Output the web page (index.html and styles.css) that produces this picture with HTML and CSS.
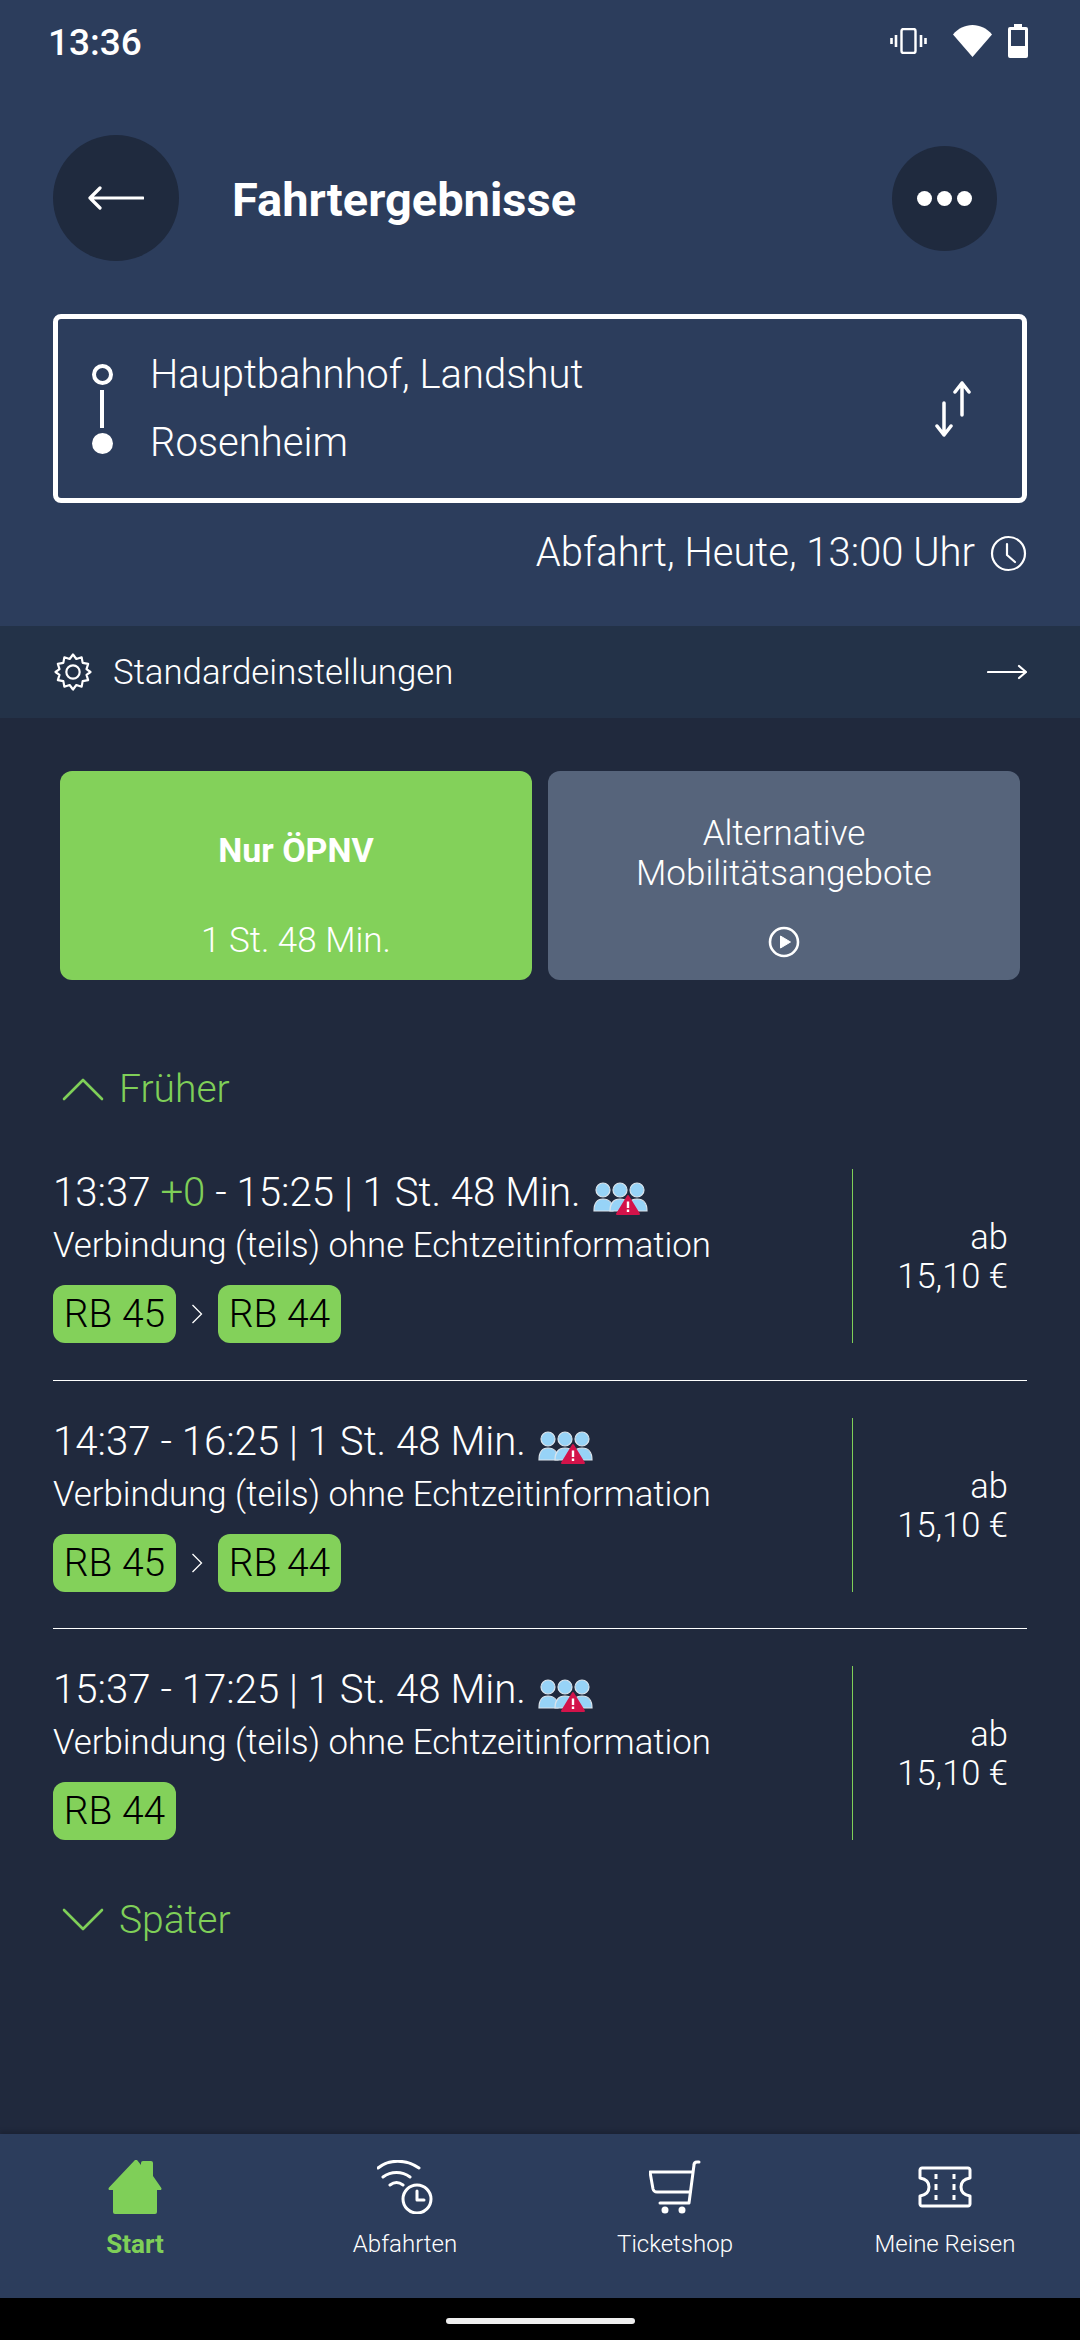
FILE: index.html
```html
<!DOCTYPE html>
<html>
<head>
<meta charset="utf-8"/>
<title>Fahrtergebnisse</title>
<link rel="stylesheet" href="styles.css">
</head>
<body>
<div class="page">

<header class="head">
  <div class="status">
    <span class="clock">13:36</span>
    <div class="status-icons">
      <svg class="ic-vib" width="37" height="26" viewBox="0 0 37 26" fill="none" stroke="#fff"><rect x="11.5" y="1" width="14" height="24" rx="2" stroke-width="2.4"/><path d="M6 7v12M1.5 10v6M31 7v12M35.500 10v6" stroke-width="2.6"/></svg>
      <svg class="ic-wifi" width="39" height="32" viewBox="0 0 39 32"><path d="M0 9.500C5 3.500 12 0 19.500 0S34 3.500 39 9.500L19.500 32z" fill="#fff"/></svg>
      <svg class="ic-batt" width="20" height="34" viewBox="0 0 20 34"><path d="M6 0h8v3h4a2 2 0 0 1 2 2v27a2 2 0 0 1-2 2H2a2 2 0 0 1-2-2V5a2 2 0 0 1 2-2h4z" fill="#fff"/><rect x="3" y="6" width="14" height="16" fill="#2c3d5c"/></svg>
    </div>
  </div>

  <div class="topbar">
    <button class="round round-back">
      <svg width="56" height="24" viewBox="0 0 56 24" fill="none" stroke="#fff" stroke-width="3.200" stroke-linecap="round" stroke-linejoin="round"><path d="M2 12h53M12 2 2 12l10 10"/></svg>
    </button>
    <h1 class="title">Fahrtergebnisse</h1>
    <button class="round round-more">
      <span class="dot"></span><span class="dot"></span><span class="dot"></span>
    </button>
  </div>

  <div class="route">
    <div class="route-marks">
      <span class="mark-open"></span>
      <span class="mark-line"></span>
      <span class="mark-full"></span>
    </div>
    <div class="route-names">
      <div>Hauptbahnhof, Landshut</div>
      <div>Rosenheim</div>
    </div>
    <svg class="swap" width="37" height="56" viewBox="0 0 37 56" fill="none" stroke="#fff" stroke-width="3.500" stroke-linecap="round" stroke-linejoin="round"><path d="M27 34V2M20 11l7-9 7 9M9 22v32M2 45l7 9 7-9"/></svg>
  </div>

  <div class="when">
    <span>Abfahrt, Heute, 13:00 Uhr</span>
    <svg width="37" height="37" viewBox="0 0 37 37" fill="none" stroke="#fff" stroke-width="2.200" stroke-linecap="round" stroke-linejoin="round"><circle cx="18.500" cy="18.500" r="16.500"/><path d="M17 9v11l8 7"/></svg>
  </div>
</header>

<div class="settings">
  <svg width="40" height="40" viewBox="0 0 24 24" fill="none" stroke="#fff" stroke-width="1.300" stroke-linejoin="round"><path d="M12 1.500l2 2.700 3.200-1 .6 3.300 3.300.6-1 3.200 2.400 1.700-2.400 1.700 1 3.200-3.300.6-.6 3.300-3.200-1-2 2.700-2-2.700-3.200 1-.6-3.300-3.300-.6 1-3.200L1.500 12l2.400-1.700-1-3.200 3.300-.6.6-3.300 3.200 1z"/><circle cx="12" cy="12" r="4"/></svg>
  <span class="settings-label">Standardeinstellungen</span>
  <svg width="40" height="18" viewBox="0 0 40 18" fill="none" stroke="#fff" stroke-width="2.200" stroke-linecap="round" stroke-linejoin="round"><path d="M1 9h38M32 3l7 6-7 6"/></svg>
</div>

<main class="main">
  <div class="modes">
    <div class="mode mode-green">
      <b class="mode-name">Nur ÖPNV</b>
      <span class="mode-time">1 St. 48 Min.</span>
    </div>
    <div class="mode mode-grey">
      <span class="mode-alt">Alternative<br>Mobilitätsangebote</span>
      <svg width="32" height="32" viewBox="0 0 32 32" fill="none" stroke="#fff" stroke-width="2.600"><circle cx="16" cy="16" r="14"/><path d="M12.500 10l10 6-10 6z" fill="#fff" stroke-width="1" stroke-linejoin="round"/></svg>
    </div>
  </div>

  <div class="pager pager-up">
    <svg width="42" height="24" viewBox="0 0 42 24" fill="none" stroke="#7fcf58" stroke-width="2.600" stroke-linecap="round" stroke-linejoin="round"><path d="M2 22 21 3l19 19"/></svg>
    <span>Früher</span>
  </div>

  <div class="trip">
    <div class="trip-info">
      <div class="trip-time">13:37 <span class="ontime">+0</span> - 15:25 | 1 St. 48 Min.
        <svg class="crowd" width="55" height="34" viewBox="0 0 55 34"><use href="#crowd"/></svg>
      </div>
      <div class="trip-note">Verbindung (teils) ohne Echtzeitinformation</div>
      <div class="lines">
        <span class="line">RB 45</span>
        <svg class="sep" width="12" height="20" viewBox="0 0 12 20" fill="none" stroke="#fff" stroke-width="1.300"><path d="M1.500 1l9 9-9 9"/></svg>
        <span class="line">RB 44</span>
      </div>
    </div>
    <div class="trip-price">ab<br>15,10 €</div>
  </div>

  <div class="trip">
    <div class="trip-info">
      <div class="trip-time">14:37 - 16:25 | 1 St. 48 Min.
        <svg class="crowd" width="55" height="34" viewBox="0 0 55 34"><use href="#crowd"/></svg>
      </div>
      <div class="trip-note">Verbindung (teils) ohne Echtzeitinformation</div>
      <div class="lines">
        <span class="line">RB 45</span>
        <svg class="sep" width="12" height="20" viewBox="0 0 12 20" fill="none" stroke="#fff" stroke-width="1.300"><path d="M1.500 1l9 9-9 9"/></svg>
        <span class="line">RB 44</span>
      </div>
    </div>
    <div class="trip-price">ab<br>15,10 €</div>
  </div>

  <div class="trip trip-last">
    <div class="trip-info">
      <div class="trip-time">15:37 - 17:25 | 1 St. 48 Min.
        <svg class="crowd" width="55" height="34" viewBox="0 0 55 34"><use href="#crowd"/></svg>
      </div>
      <div class="trip-note">Verbindung (teils) ohne Echtzeitinformation</div>
      <div class="lines">
        <span class="line">RB 44</span>
      </div>
    </div>
    <div class="trip-price">ab<br>15,10 €</div>
  </div>

  <div class="pager pager-down">
    <svg width="42" height="24" viewBox="0 0 42 24" fill="none" stroke="#7fcf58" stroke-width="2.600" stroke-linecap="round" stroke-linejoin="round"><path d="M2 2l19 19L40 2"/></svg>
    <span>Später</span>
  </div>
</main>

<nav class="nav">
  <div class="nav-item nav-active">
    <svg width="54" height="54" viewBox="0 0 54 54"><path d="M27 0 1 27.500c-1 1.200-.5 2.500 1 2.500h3v22a2 2 0 0 0 2 2h40a2 2 0 0 0 2-2V30h3c1.500 0 2-1.300 1-2.500L45 16V3a2 2 0 0 0-2-2h-8a2 2 0 0 0-2 2v2l-4-5a1.400 1.400 0 0 0-2 0z" fill="#7fcf58"/></svg>
    <span>Start</span>
  </div>
  <div class="nav-item">
    <svg width="56" height="54" viewBox="0 0 56 54" fill="none" stroke="#fff" stroke-width="3" stroke-linecap="round"><path d="M1 8C12-1 29-1 42 8M6 17c8-6 19-6 27 0M13 25c4-3 9-3 13 0"/><circle cx="40" cy="39" r="14"/><path d="M40 31v9h7" stroke-linejoin="round"/></svg>
    <span>Abfahrten</span>
  </div>
  <div class="nav-item">
    <svg width="52" height="54" viewBox="0 0 52 54" fill="none" stroke="#fff" stroke-width="3" stroke-linecap="round" stroke-linejoin="round"><path d="M50 2h-2c-2 0-3 1-3 3l-5 38H11"/><path d="M43 12H1l3 17c.5 2 2 3 4 3h33"/><circle cx="16" cy="50" r="2" fill="#fff"/><circle cx="33" cy="50" r="2" fill="#fff"/></svg>
    <span>Ticketshop</span>
  </div>
  <div class="nav-item">
    <svg width="54" height="54" viewBox="0 0 54 54" fill="none" stroke="#fff" stroke-width="3" stroke-linejoin="round"><path d="M4 8h46c1 0 2 1 2 2v8c-6 1-9 4-9 9s3 8 9 9v8c0 1-1 2-2 2H4c-1 0-2-1-2-2v-8c6-1 9-4 9-9s-3-8-9-9v-8c0-1 1-2 2-2z"/><path d="M18 14v5M18 24v6M18 35v5M36 14v5M36 24v6M36 35v5"/></svg>
    <span>Meine Reisen</span>
  </div>
</nav>

<div class="gesture"><span class="handle"></span></div>

</div>

<svg class="defs" width="0" height="0">
  <defs>
    <g id="crowd">
      <g fill="#97d3f7" stroke="#dbe4ec" stroke-width="1.200">
        <circle cx="10" cy="8" r="7"/><path d="M1 29c0-8 3-12 9-12s10 4 10 12z"/>
        <circle cx="44" cy="8" r="7"/><path d="M34 29c0-8 4-12 10-12s10 4 10 12z"/>
        <circle cx="27" cy="8" r="7"/><path d="M17 29c0-8 4-12 10-12s10 4 10 12z"/>
      </g>
      <path d="M35 14 46 32H24z" fill="#d3134a" stroke="#d3134a" stroke-width="2" stroke-linejoin="round"/>
      <path d="M35 19.500v6.500M35 27.500v2.500" stroke="#fff" stroke-width="2.400"/>
    </g>
  </defs>
</svg>

</body>
</html>
```

FILE: styles.css
```css
body {
  margin: 0;
  background-color: #20293d;
  font-family: Roboto, sans-serif;
  color: #fff;
}

button {
  border: none;
  padding: 0;
  font: inherit;
  color: inherit;
}

.page {
  width: 1080px;
  height: 2340px;
  display: flex;
  flex-direction: column;
  overflow: hidden;
}

.defs {
  position: absolute;
}

/* top part */
.head {
  height: 626px;
  box-sizing: border-box;
  background-color: #2c3d5c;
  padding: 0 53px;
}

.status {
  height: 84px;
  display: flex;
  align-items: center;
  justify-content: space-between;
  margin-right: -1px;
  margin-left: -5px;
}

.clock {
  font-size: 37px;
  font-weight: 500;
}

.status-icons {
  display: flex;
  align-items: center;
  margin-top: -3px;
}

.ic-wifi {
  margin-left: 26px;
}

.ic-batt {
  margin-left: 16px;
}

.topbar {
  height: 126px;
  margin-top: 51px;
  display: flex;
  align-items: center;
}

.round {
  display: flex;
  align-items: center;
  justify-content: center;
  border-radius: 50%;
  background-color: #1f2a3e;
  flex: none;
}

.round-back {
  width: 126px;
  height: 126px;
}

.round-more {
  width: 105px;
  height: 105px;
  gap: 5px;
  margin-right: 30px;
}

.dot {
  width: 15px;
  height: 15px;
  border-radius: 50%;
  background-color: #fff;
}

.title {
  flex: 1;
  margin: 2px 0 0 53px;
  font-size: 47px;
  font-weight: 700;
}

.route {
  height: 189px;
  box-sizing: border-box;
  margin-top: 53px;
  border: 5px solid #fff;
  border-radius: 8px;
  display: flex;
  align-items: center;
  padding: 0 0 0 33px;
}

.route-marks {
  width: 22px;
  height: 90px;
  display: flex;
  flex-direction: column;
  align-items: center;
  justify-content: space-between;
}

.mark-open {
  width: 21px;
  height: 21px;
  box-sizing: border-box;
  border: 4px solid #fff;
  border-radius: 50%;
}

.mark-line {
  width: 4px;
  flex: 1;
  margin: 5px 0;
  background-color: #fff;
}

.mark-full {
  width: 21px;
  height: 21px;
  border-radius: 50%;
  background-color: #fff;
}

.route-names {
  flex: 1;
  margin-left: 37px;
  font-size: 40px;
  font-weight: 300;
  line-height: 68px;
}

.swap {
  margin-right: 50px;
}

.when {
  display: flex;
  align-items: center;
  justify-content: flex-end;
  gap: 15px;
  margin-top: 28px;
  font-size: 40px;
  font-weight: 300;
  line-height: 44px;
}

.settings {
  height: 92px;
  flex: none;
  box-sizing: border-box;
  padding: 0 53px;
  background-color: #233248;
  display: flex;
  align-items: center;
}

.settings-label {
  flex: 1;
  margin-left: 20px;
  font-size: 34.800px;
  font-weight: 300;
}

/* results */
.main {
  flex: 1;
  padding: 53px 53px 0;
}

.modes {
  display: flex;
  gap: 16px;
  margin: 0 7px;
}

.mode {
  flex: 1;
  height: 209px;
  box-sizing: border-box;
  border-radius: 12px;
  display: flex;
  flex-direction: column;
  align-items: center;
  text-align: center;
}

.mode-green {
  background-color: #83d15a;
}

.mode-grey {
  background-color: #56647b;
  font-size: 35px;
  font-weight: 300;
  padding-top: 43px;
}

.mode-name {
  margin-top: 61px;
  font-size: 34px;
  line-height: 36px;
}

.mode-time {
  margin-top: 53px;
  font-size: 35px;
  font-weight: 300;
  line-height: 40px;
}

.mode-alt {
  line-height: 40px;
}

.mode-grey svg {
  margin-top: 32px;
}

.pager {
  display: flex;
  align-items: center;
  gap: 15px;
  margin-left: 9px;
  color: #7fcf58;
  font-size: 39px;
  font-weight: 300;
  line-height: 44px;
}

.pager-up {
  margin-top: 87px;
  margin-bottom: 21px;
}

.pager-down {
  margin-top: 57px;
}

.trip {
  height: 248.500px;
  box-sizing: border-box;
  border-bottom: 1px solid #fff;
  display: flex;
  padding-top: 37px;
}

.trip-last {
  height: 212px;
  border-bottom: none;
}

.trip-info {
  flex: 1;
  border-right: 1px solid #7fcf58;
  height: 174px;
}

.trip-time {
  font-size: 40.200px;
  font-weight: 300;
  line-height: 48px;
}

.ontime {
  color: #7fcf58;
}

.crowd {
  margin-left: 2px;
  vertical-align: -10px;
}

.trip-note {
  font-size: 34.800px;
  font-weight: 300;
  line-height: 40px;
  margin-top: 8px;
}

.lines {
  display: flex;
  align-items: center;
  gap: 15px;
  margin-top: 20px;
}

.line {
  height: 58px;
  width: 123px;
  border-radius: 12px;
  background-color: #83d15a;
  color: #000;
  font-size: 39px;
  font-weight: 300;
  line-height: 58px;
  text-align: center;
}

.trip-price {
  width: 174px;
  box-sizing: border-box;
  padding: 49px 19px 0 0;
  text-align: right;
  font-size: 34.500px;
  font-weight: 300;
  line-height: 39px;
}

/* bottom bar */
.nav {
  height: 164px;
  flex: none;
  background-color: #2c3d5c;
  box-shadow: 0 -3px 4px rgba(0, 0, 0, 0.15);
  display: flex;
}

.nav-item {
  flex: 1;
  display: flex;
  flex-direction: column;
  align-items: center;
  padding-top: 26px;
  font-size: 24px;
  font-weight: 300;
  line-height: 30px;
}

.nav-item span {
  margin-top: 15px;
}

.nav-active {
  color: #7fcf58;
  font-weight: 700;
  font-size: 26px;
}

.gesture {
  height: 42px;
  flex: none;
  background-color: #000;
  display: flex;
  justify-content: center;
  padding-top: 20px;
  box-sizing: border-box;
}

.handle {
  width: 189px;
  height: 6px;
  border-radius: 3px;
  background-color: #eee;
}
```
